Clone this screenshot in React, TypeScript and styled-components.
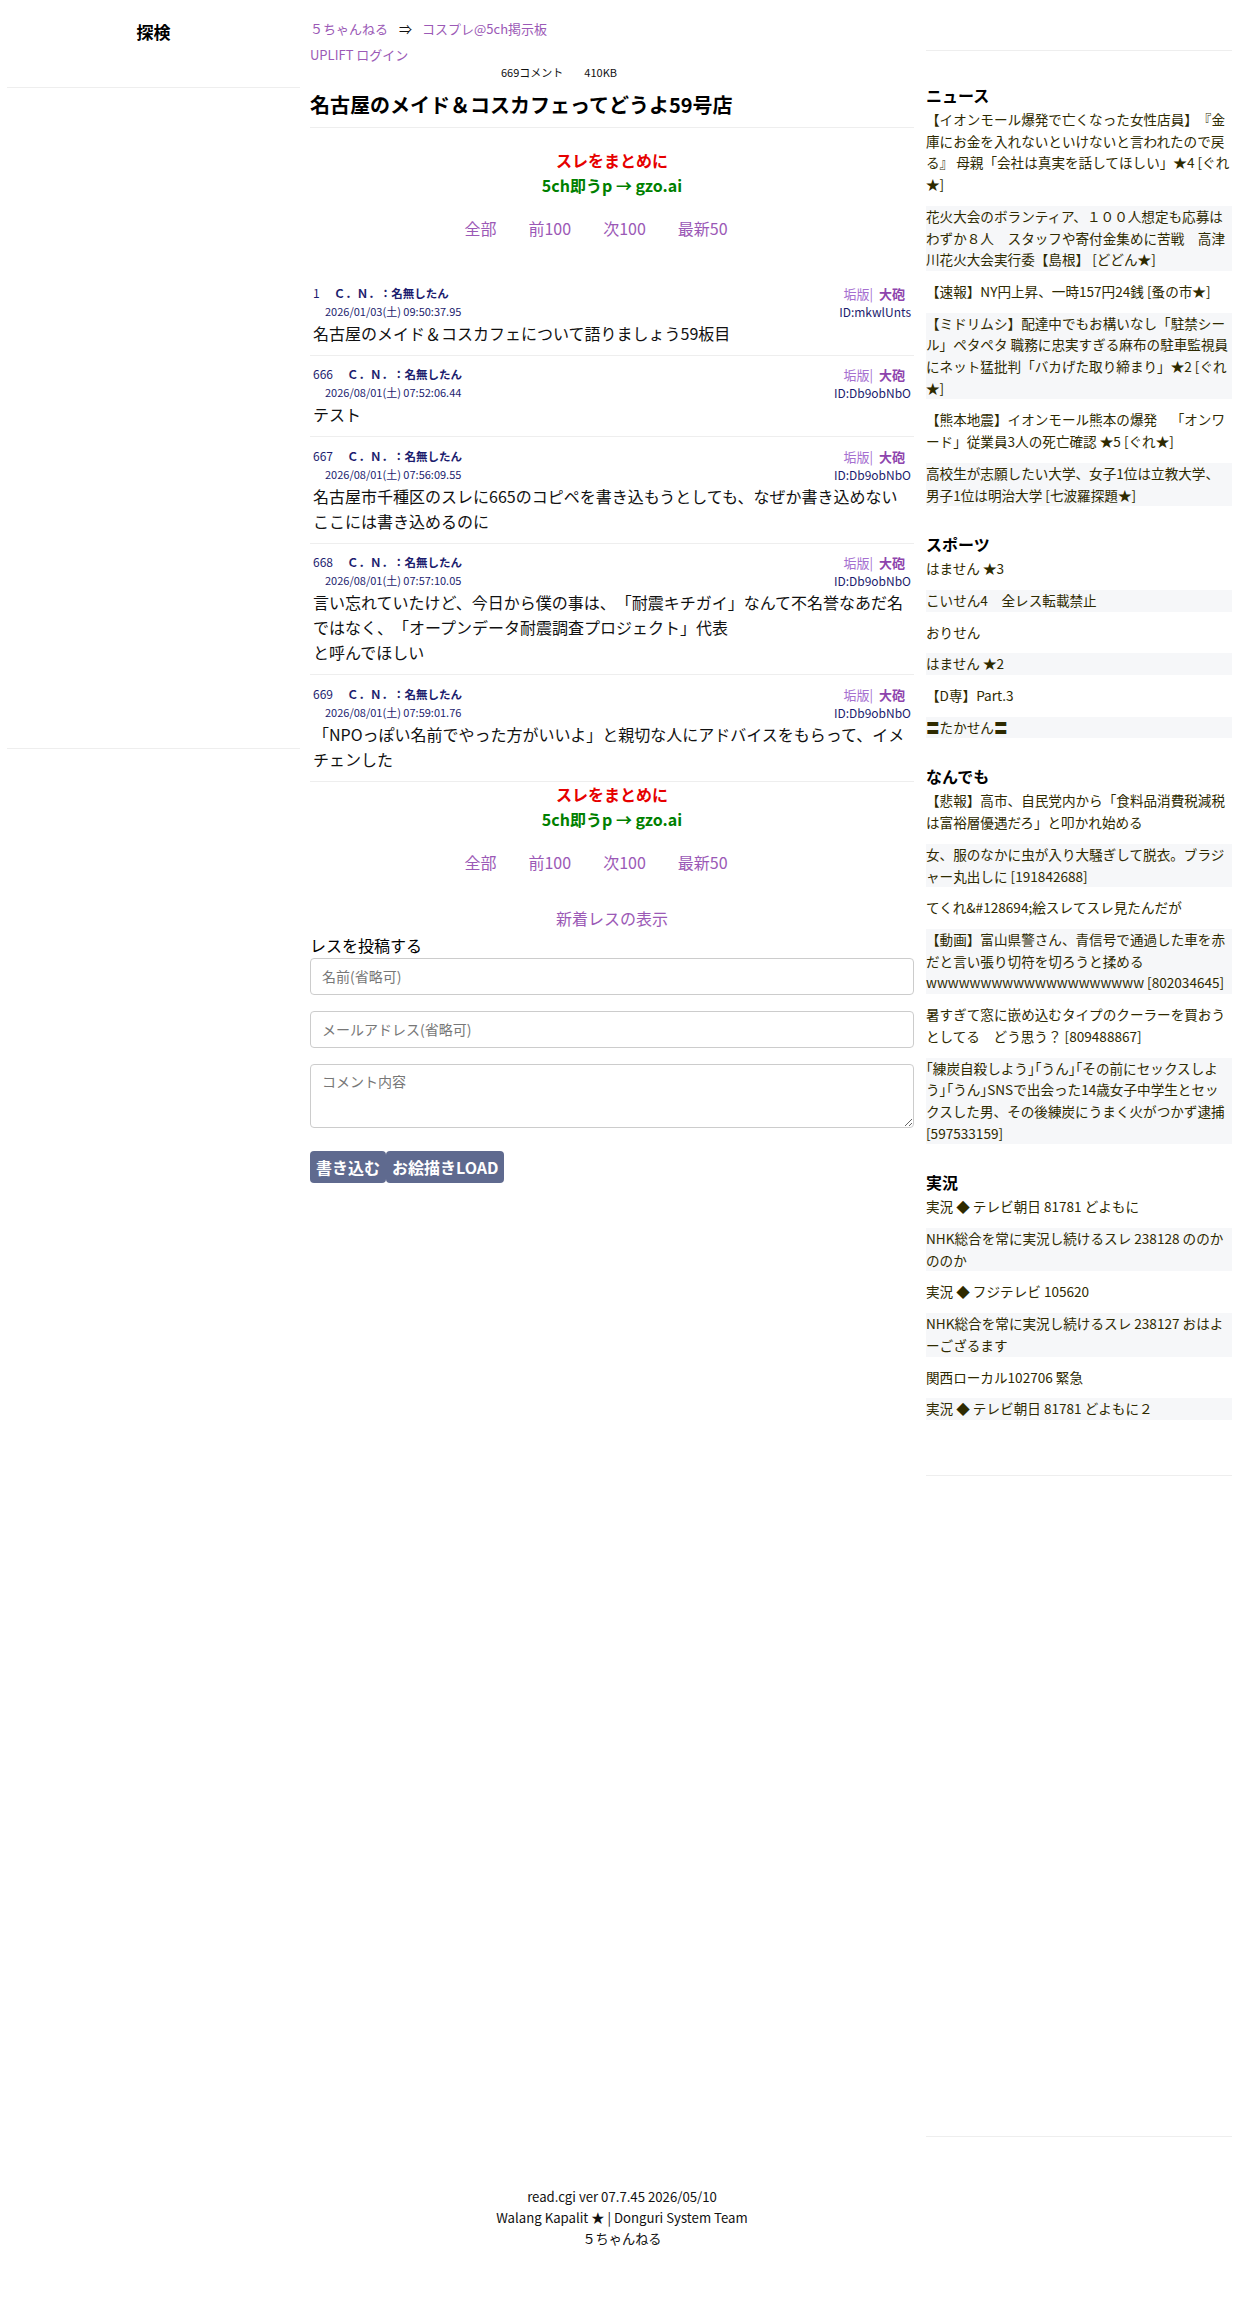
import React from 'react';
import styled, { createGlobalStyle } from 'styled-components';

type Post = {
  num: string;
  date: string;
  id: string;
  lines: string[];
};

type Section = {
  title: string;
  items: string[];
};

const posts: Post[] = [
  {
    num: '1',
    date: '2026/01/03(土) 09:50:37.95',
    id: 'ID:mkwlUnts',
    lines: ['名古屋のメイド＆コスカフェについて語りましょう59板目'],
  },
  {
    num: '666',
    date: '2026/08/01(土) 07:52:06.44',
    id: 'ID:Db9obNbO',
    lines: ['テスト'],
  },
  {
    num: '667',
    date: '2026/08/01(土) 07:56:09.55',
    id: 'ID:Db9obNbO',
    lines: ['名古屋市千種区のスレに665のコピペを書き込もうとしても、なぜか書き込めない', 'ここには書き込めるのに'],
  },
  {
    num: '668',
    date: '2026/08/01(土) 07:57:10.05',
    id: 'ID:Db9obNbO',
    lines: [
      '言い忘れていたけど、今日から僕の事は、「耐震キチガイ」なんて不名誉なあだ名ではなく、「オープンデータ耐震調査プロジェクト」代表',
      'と呼んでほしい',
    ],
  },
  {
    num: '669',
    date: '2026/08/01(土) 07:59:01.76',
    id: 'ID:Db9obNbO',
    lines: ['「NPOっぽい名前でやった方がいいよ」と親切な人にアドバイスをもらって、イメチェンした'],
  },
];

const sections: Section[] = [
  {
    title: 'ニュース',
    items: [
      '【イオンモール爆発で亡くなった女性店員】『金庫にお金を入れないといけないと言われたので戻る』 母親「会社は真実を話してほしい」★4 [ぐれ★]',
      '花火大会のボランティア、１００人想定も応募はわずか８人　スタッフや寄付金集めに苦戦　高津川花火大会実行委【島根】 [どどん★]',
      '【速報】NY円上昇、一時157円24銭 [蚤の市★]',
      '【ミドリムシ】配達中でもお構いなし「駐禁シール」ペタペタ 職務に忠実すぎる麻布の駐車監視員にネット猛批判「バカげた取り締まり」★2 [ぐれ★]',
      '【熊本地震】イオンモール熊本の爆発　「オンワード」従業員3人の死亡確認 ★5 [ぐれ★]',
      '高校生が志願したい大学、女子1位は立教大学、男子1位は明治大学 [七波羅探題★]',
    ],
  },
  {
    title: 'スポーツ',
    items: ['はません ★3', 'こいせん4　全レス転載禁止', 'おりせん', 'はません ★2', '【D専】Part.3', '〓たかせん〓'],
  },
  {
    title: 'なんでも',
    items: [
      '【悲報】高市、自民党内から「食料品消費税減税は富裕層優遇だろ」と叩かれ始める',
      '女、服のなかに虫が入り大騒ぎして脱衣。ブラジャー丸出しに [191842688]',
      'てくれ&#128694;絵スレてスレ見たんだが',
      '【動画】富山県警さん、青信号で通過した車を赤だと言い張り切符を切ろうと揉める wwwwwwwwwwwwwwwwwwww [802034645]',
      '暑すぎて窓に嵌め込むタイプのクーラーを買おうとしてる　どう思う？ [809488867]',
      '｢練炭自殺しよう｣｢うん｣｢その前にセックスしよう｣｢うん｣SNSで出会った14歳女子中学生とセックスした男、その後練炭にうまく火がつかず逮捕 [597533159]',
    ],
  },
  {
    title: '実況',
    items: [
      '実況 ◆ テレビ朝日 81781 どよもに',
      'NHK総合を常に実況し続けるスレ 238128 ののかののか',
      '実況 ◆ フジテレビ 105620',
      'NHK総合を常に実況し続けるスレ 238127 おはよーござるます',
      '関西ローカル102706 緊急',
      '実況 ◆ テレビ朝日 81781 どよもに２',
    ],
  },
];

const GlobalStyle = createGlobalStyle`
  body {
    margin: 0;
    background: #fff;
    color: #111;
    font-family: "Noto Sans CJK JP", "Noto Sans", sans-serif;
    text-spacing-trim: space-all;
  }
  a {
    text-decoration: none;
  }
`;

const Page = styled.div`
  width: 1244px;
  min-height: 2311px;
`;

const Columns = styled.div`
  display: flex;
  align-items: flex-start;
`;

const LeftSide = styled.aside`
  margin-left: 7px;
  width: 293px;
`;

const SideTitle = styled.div`
  box-sizing: border-box;
  height: 88px;
  padding-top: 20px;
  border-bottom: 1px solid #eee;
  text-align: center;
  font-size: 17px;
  font-weight: 700;
  line-height: 24px;
  color: #000;
`;

const AdSlot = styled.div`
  height: 660px;
  border-bottom: 1px solid #eee;
`;

const Main = styled.main`
  margin-left: 10px;
  width: 604px;
`;

const Crumbs = styled.div`
  padding-top: 18px;
  font-size: 13px;
  line-height: 22px;
`;

const Link = styled.a`
  color: #9b59b6;
`;

const Arrow = styled.span`
  margin: 0 10px 0 11px;
  color: #111;
`;

const Login = styled.div`
  margin-top: 4px;
  font-size: 13px;
  line-height: 22px;
`;

const Meta = styled.div`
  padding-left: 191px;
  font-size: 11px;
  line-height: 12px;
  display: flex;
  gap: 21px;
`;

const Title = styled.h1`
  margin: 12px 0 0;
  padding-bottom: 7px;
  border-bottom: 1px solid #eee;
  font-size: 20px;
  line-height: 30px;
  font-weight: 700;
  color: #000;
`;

const Promo = styled.div<{ $top: number }>`
  padding-top: ${(p) => p.$top}px;
  text-align: center;
  font-size: 16px;
  font-weight: 700;
  line-height: 25px;
`;

const PromoRed = styled.div`
  color: #e60000;
`;

const PromoGreen = styled.div`
  color: #008000;
`;

const Nav = styled.nav`
  margin-top: 18px;
  padding-right: 32px;
  display: flex;
  justify-content: center;
  gap: 32px;
  font-size: 16px;
  line-height: 24px;
`;

const PostList = styled.div`
  margin-top: 34px;
`;

const PostBox = styled.article`
  padding: 8.5px 3px 9px;
  border-bottom: 1px solid #eee;
`;

const PostHead = styled.div`
  display: flex;
  justify-content: space-between;
  align-items: flex-start;
  color: #1c1c6e;
`;

const HeadLeft = styled.div``;

const HeadRight = styled.div`
  display: flex;
  flex-direction: column;
  align-items: flex-end;
`;

const NameRow = styled.div`
  display: flex;
  align-items: baseline;
  height: 19px;
  font-size: 12px;
  line-height: 19px;
`;

const Num = styled.span`
  margin-right: 14px;
`;

const Name = styled.span`
  font-weight: 700;
  font-size: 11.5px;
`;

const DateRow = styled.div`
  padding-left: 12px;
  font-size: 11px;
  line-height: 19px;
`;

const Tools = styled.div`
  display: flex;
  align-items: baseline;
  height: 19px;
  padding-right: 6px;
  font-size: 13px;
  line-height: 21px;
  color: #a56fd0;
`;

const ToolStrong = styled.span`
  margin-left: 6px;
  font-weight: 700;
  color: #8e44ad;
`;

const IdRow = styled.div`
  font-size: 12px;
  line-height: 19px;
`;

const Body = styled.div`
  font-size: 16px;
  line-height: 25px;
  color: #111;
`;

const NewPosts = styled.div`
  margin-top: 32px;
  text-align: center;
  font-size: 16px;
  line-height: 24px;
`;

const FormTitle = styled.div`
  margin-top: 3px;
  font-size: 16px;
  line-height: 24px;
  color: #000;
`;

const Form = styled.form`
  display: flex;
  flex-direction: column;
  gap: 16px;
  margin-top: 1px;
`;

const Field = styled.input`
  box-sizing: border-box;
  height: 37px;
  width: 100%;
  padding: 0 11px;
  border: 1px solid #ccc;
  border-radius: 4px;
  font-family: inherit;
  font-size: 14px;
  &::placeholder {
    color: #777;
  }
`;

const Comment = styled.textarea`
  box-sizing: border-box;
  height: 64px;
  width: 100%;
  padding: 6px 11px;
  border: 1px solid #ccc;
  border-radius: 4px;
  font-family: inherit;
  font-size: 14px;
  line-height: 20px;
  resize: vertical;
  &::placeholder {
    color: #777;
  }
`;

const Buttons = styled.div`
  display: flex;
  margin-top: 23px;
`;

const Button = styled.button`
  height: 32px;
  padding: 0 6px;
  border: none;
  border-radius: 4px;
  background: #5f6a8f;
  color: #fff;
  font-family: inherit;
  font-size: 16px;
  font-weight: 700;
`;

const RightSide = styled.aside`
  margin-left: 12px;
  width: 306px;
  padding-top: 50px;
`;

const Board = styled.div`
  border-top: 1px solid #eee;
  border-bottom: 1px solid #eee;
  padding: 30px 0 45px;
`;

const Group = styled.section`
  & + & {
    padding-top: 14px;
  }
`;

const GroupTitle = styled.h3`
  margin: 0;
  font-size: 16px;
  line-height: 28px;
  font-weight: 700;
  color: #000;
`;

const Item = styled.div<{ $shade: boolean }>`
  margin-bottom: 10px;
  background: ${(p) => (p.$shade ? '#f6f7f9' : 'transparent')};
  font-size: 13.6px;
  line-height: 21.7px;
  color: #2e2a00;
`;

const Footer = styled.footer`
  margin-top: 49px;
  padding-bottom: 52px;
  text-align: center;
  font-size: 13.2px;
  line-height: 21px;
  color: #111;
`;

function PostView({ post }: { post: Post }) {
  return (
    <PostBox>
      <PostHead>
        <HeadLeft>
          <NameRow>
            <Num>{post.num}</Num>
            <Name>Ｃ．Ｎ．：名無したん</Name>
          </NameRow>
          <DateRow>{post.date}</DateRow>
        </HeadLeft>
        <HeadRight>
          <Tools>
            垢版|<ToolStrong>大砲</ToolStrong>
          </Tools>
          <IdRow>{post.id}</IdRow>
        </HeadRight>
      </PostHead>
      <Body>
        {post.lines.map((line, i) => (
          <div key={i}>{line}</div>
        ))}
      </Body>
    </PostBox>
  );
}

function PromoBlock({ top }: { top: number }) {
  return (
    <Promo $top={top}>
      <PromoRed>スレをまとめに</PromoRed>
      <PromoGreen>5ch即うp → gzo.ai</PromoGreen>
    </Promo>
  );
}

function PageNav() {
  return (
    <Nav>
      <Link>全部</Link>
      <Link>前100</Link>
      <Link>次100</Link>
      <Link>最新50</Link>
    </Nav>
  );
}

export default function App() {
  return (
    <Page>
      <GlobalStyle />
      <Columns>
        <LeftSide>
          <SideTitle>探検</SideTitle>
          <AdSlot />
        </LeftSide>

        <Main>
          <Crumbs>
            <Link>５ちゃんねる</Link>
            <Arrow>⇒</Arrow>
            <Link>コスプレ@5ch掲示板</Link>
          </Crumbs>
          <Login>
            <Link>UPLIFT ログイン</Link>
          </Login>
          <Meta>
            <span>669コメント</span>
            <span>410KB</span>
          </Meta>
          <Title>名古屋のメイド＆コスカフェってどうよ59号店</Title>

          <PromoBlock top={20} />
          <PageNav />

          <PostList>
            {posts.map((p) => (
              <PostView key={p.num} post={p} />
            ))}
          </PostList>

          <PromoBlock top={0} />
          <PageNav />

          <NewPosts>
            <Link>新着レスの表示</Link>
          </NewPosts>
          <FormTitle>レスを投稿する</FormTitle>
          <Form onSubmit={(e) => e.preventDefault()}>
            <Field placeholder="名前(省略可)" />
            <Field placeholder="メールアドレス(省略可)" />
            <Comment placeholder="コメント内容" />
          </Form>
          <Buttons>
            <Button type="button">書き込む</Button>
            <Button type="button">お絵描きLOAD</Button>
          </Buttons>
        </Main>

        <RightSide>
          <Board>
            {sections.map((s) => (
              <Group key={s.title}>
                <GroupTitle>{s.title}</GroupTitle>
                {s.items.map((item, i) => (
                  <Item key={i} $shade={i % 2 === 1}>
                    {item}
                  </Item>
                ))}
              </Group>
            ))}
          </Board>
          <AdSlot />
        </RightSide>
      </Columns>

      <Footer>
        <div>read.cgi ver 07.7.45 2026/05/10</div>
        <div>Walang Kapalit ★ | Donguri System Team</div>
        <div>５ちゃんねる</div>
      </Footer>
    </Page>
  );
}
